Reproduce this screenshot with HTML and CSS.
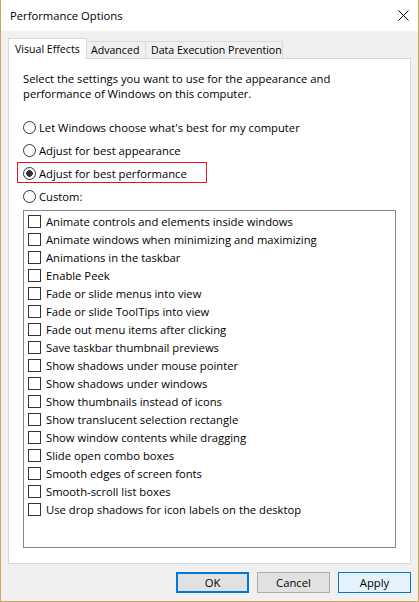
FILE: index.html
```html
<!DOCTYPE html>
<html lang="en">
<head>
<meta charset="utf-8">
<title>Performance Options</title>
<link rel="stylesheet" href="styles.css">
</head>
<body>
<div class="window">
  <div class="titlebar">
    <span class="title">Performance Options</span>
    <svg class="close" width="11" height="11" viewBox="0 0 11 11"><path d="M0.5 0.5L10.5 10.5M10.5 0.5L0.5 10.5" stroke="#000" stroke-width="1" fill="none"/></svg>
  </div>
  <div class="main">
    <div class="tabs">
      <div class="tab active">Visual Effects</div>
      <div class="tab tab-adv">Advanced</div>
      <div class="tab tab-dep">Data Execution Prevention</div>
    </div>
    <div class="panel">
      <p class="intro">Select the settings you want to use for the appearance and<br>performance of Windows on this computer.</p>
      <div class="radios">
        <div class="radio"><span class="rb"></span>Let Windows choose what's best for my computer</div>
        <div class="radio"><span class="rb"></span>Adjust for best appearance</div>
        <div class="radio"><span class="rb on"></span>Adjust for best performance<span class="mark"></span></div>
        <div class="radio"><span class="rb"></span>Custom:</div>
      </div>
      <div class="listbox">
        <div class="check"><span class="cb"></span>Animate controls and elements inside windows</div>
        <div class="check"><span class="cb"></span>Animate windows when minimizing and maximizing</div>
        <div class="check"><span class="cb"></span>Animations in the taskbar</div>
        <div class="check"><span class="cb"></span>Enable Peek</div>
        <div class="check"><span class="cb"></span>Fade or slide menus into view</div>
        <div class="check"><span class="cb"></span>Fade or slide ToolTips into view</div>
        <div class="check"><span class="cb"></span>Fade out menu items after clicking</div>
        <div class="check"><span class="cb"></span>Save taskbar thumbnail previews</div>
        <div class="check"><span class="cb"></span>Show shadows under mouse pointer</div>
        <div class="check"><span class="cb"></span>Show shadows under windows</div>
        <div class="check"><span class="cb"></span>Show thumbnails instead of icons</div>
        <div class="check"><span class="cb"></span>Show translucent selection rectangle</div>
        <div class="check"><span class="cb"></span>Show window contents while dragging</div>
        <div class="check"><span class="cb"></span>Slide open combo boxes</div>
        <div class="check"><span class="cb"></span>Smooth edges of screen fonts</div>
        <div class="check"><span class="cb"></span>Smooth-scroll list boxes</div>
        <div class="check"><span class="cb"></span>Use drop shadows for icon labels on the desktop</div>
      </div>
    </div>
    <div class="buttons">
      <button class="btn btn-ok">OK</button>
      <button class="btn">Cancel</button>
      <button class="btn btn-apply">Apply</button>
    </div>
  </div>
</div>
</body>
</html>
```
FILE: styles.css
```css
* { box-sizing: border-box; }
html, body { margin: 0; padding: 0; }
body {
  width: 419px;
  height: 602px;
  font-family: "Open Sans", "Noto Sans", sans-serif;
  font-size: 11.25px;
  color: #000;
  background: #fff;
}
.window {
  width: 419px;
  height: 602px;
  border: 1px solid #c9a85c;
  border-top: none;
  background: #f0f0f0;
  display: flex;
  flex-direction: column;
}
.titlebar {
  height: 31px;
  flex: none;
  background: #fff;
  display: flex;
  align-items: center;
  padding: 0 9px;
}
.close { margin-left: auto; display: block; }
.main {
  flex: 1;
  display: flex;
  flex-direction: column;
  padding: 7px 7px 8px;
}
.tabs {
  display: flex;
  align-items: flex-start;
  height: 21px;
  margin-bottom: -1px;
  position: relative;
  z-index: 1;
  flex: none;
  font-size: 10.6px;
}
.tab {
  height: 17px;
  margin-top: 3px;
  border-top: 1px solid #d9d9d9;
  border-right: 1px solid #d9d9d9;
  background: #f0f0f0;
  display: flex;
  align-items: center;
  white-space: nowrap;
  overflow: hidden;
}
.tab.active {
  height: 21px;
  margin-top: 0;
  width: 79px;
  padding-left: 6px;
  border-left: 1px solid #d9d9d9;
  background: #fff;
  padding-bottom: 1px;
}
.tab-adv { width: 59px; padding-left: 4px; }
.tab-dep { width: 137px; padding-left: 5px; }
.panel {
  height: 506px;
  flex: none;
  background: #fff;
  border: 1px solid #d9d9d9;
  padding: 12px 14px 0;
  display: flex;
  flex-direction: column;
}
.intro { margin: 0; line-height: 15px; }
.radios {
  margin-top: 15px;
  display: flex;
  flex-direction: column;
}
.radio {
  height: 23px;
  display: flex;
  align-items: center;
  position: relative;
  white-space: nowrap;
}
.rb {
  width: 13px;
  height: 13px;
  border: 1px solid #333;
  border-radius: 50%;
  margin-right: 3px;
  flex: none;
  background: #fff;
}
.rb.on { background: radial-gradient(circle, #333 0 3px, #fff 3.6px); }
.mark {
  position: absolute;
  left: -6px;
  top: 0;
  width: 190px;
  height: 21px;
  border: 1px solid #e81123;
}
.listbox {
  margin-top: 2px;
  height: 338px;
  border: 1px solid #828790;
  padding: 1px 0 0 4px;
  flex: none;
}
.check {
  height: 18px;
  display: flex;
  align-items: center;
  white-space: nowrap;
}
.cb {
  width: 13px;
  height: 13px;
  border: 1px solid #333;
  margin-right: 5px;
  flex: none;
  background: #fff;
}
.buttons {
  margin-top: 8px;
  display: flex;
  justify-content: flex-end;
  gap: 8px;
  flex: none;
}
.btn {
  width: 73px;
  height: 21px;
  padding: 0;
  margin: 0;
  font: inherit;
  color: #000;
  background: #e1e1e1;
  border: 1px solid #adadad;
  border-radius: 0;
}
.btn-ok { border: 2px solid #0078d7; }
.btn-apply { border-color: #0078d7; background: #e5f1fb; }
```
